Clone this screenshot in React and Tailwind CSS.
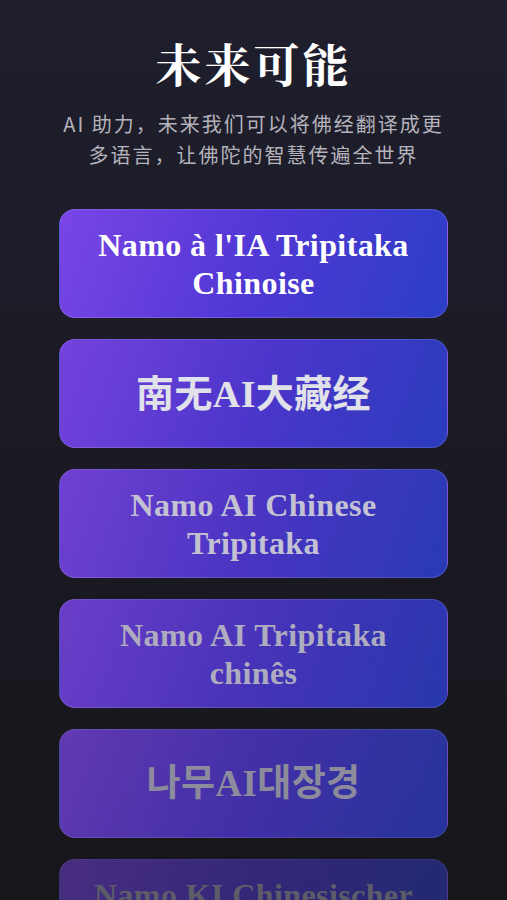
const items = [
  { text: "Namo à l'IA Tripitaka Chinoise", fade: "opacity-100", color: "text-white", size: "text-[32px]" },
  { text: "南无AI大藏经", fade: "opacity-95", color: "text-[#ececf4]", size: "text-[38px]" },
  { text: "Namo AI Chinese Tripitaka", fade: "opacity-90", color: "text-[#d6d4e6]", size: "text-[32px]" },
  { text: "Namo AI Tripitaka chinês", fade: "opacity-85", color: "text-[#c8c6da]", size: "text-[32px]" },
  { text: "나무AI대장경", fade: "opacity-75", color: "text-[#b4b2c6]", size: "text-[37px]" },
  { text: "Namo KI Chinesischer Tripitaka", fade: "opacity-50", color: "text-[#a4a2b6]", size: "text-[32px]" },
];

const serif = "font-['Liberation_Serif','Noto_Sans_CJK_SC','Noto_Sans_CJK_KR',serif]";

export default function App() {
  return (
    <div className="h-[900px] overflow-hidden bg-gradient-to-b from-[#1f1e2d] via-[#1b1a24] to-[#16161b] font-['Noto_Sans_CJK_SC',sans-serif]">
      <div className="flex flex-col items-center pt-[35px]">
        <h1 className="text-[46px] leading-[54px] font-bold text-white tracking-[3px] font-['Noto_Serif_CJK_SC','Noto_Sans_CJK_SC',serif]">
          未来可能
        </h1>
        <p className="mt-[19px] w-[392px] text-center text-[20px] leading-[31px] text-[#b4b3bb] tracking-[2px]">
          AI 助力，未来我们可以将佛经翻译成更多语言，让佛陀的智慧传遍全世界
        </p>
      </div>

      <div className="mt-[39px] flex flex-col items-center gap-[21px]">
        {items.map((item) => (
          <div
            key={item.text}
            className={`w-[389px] h-[109px] shrink-0 rounded-2xl border border-white/15 bg-[linear-gradient(110deg,#7a45e6,#5038d4_50%,#2b3ec6)] flex items-center justify-center px-6 ${item.fade}`}
          >
            <span
              className={`text-center leading-[38px] font-bold tracking-[0.4px] ${item.size} ${serif} ${item.color}`}
            >
              {item.text}
            </span>
          </div>
        ))}
      </div>
    </div>
  );
}
